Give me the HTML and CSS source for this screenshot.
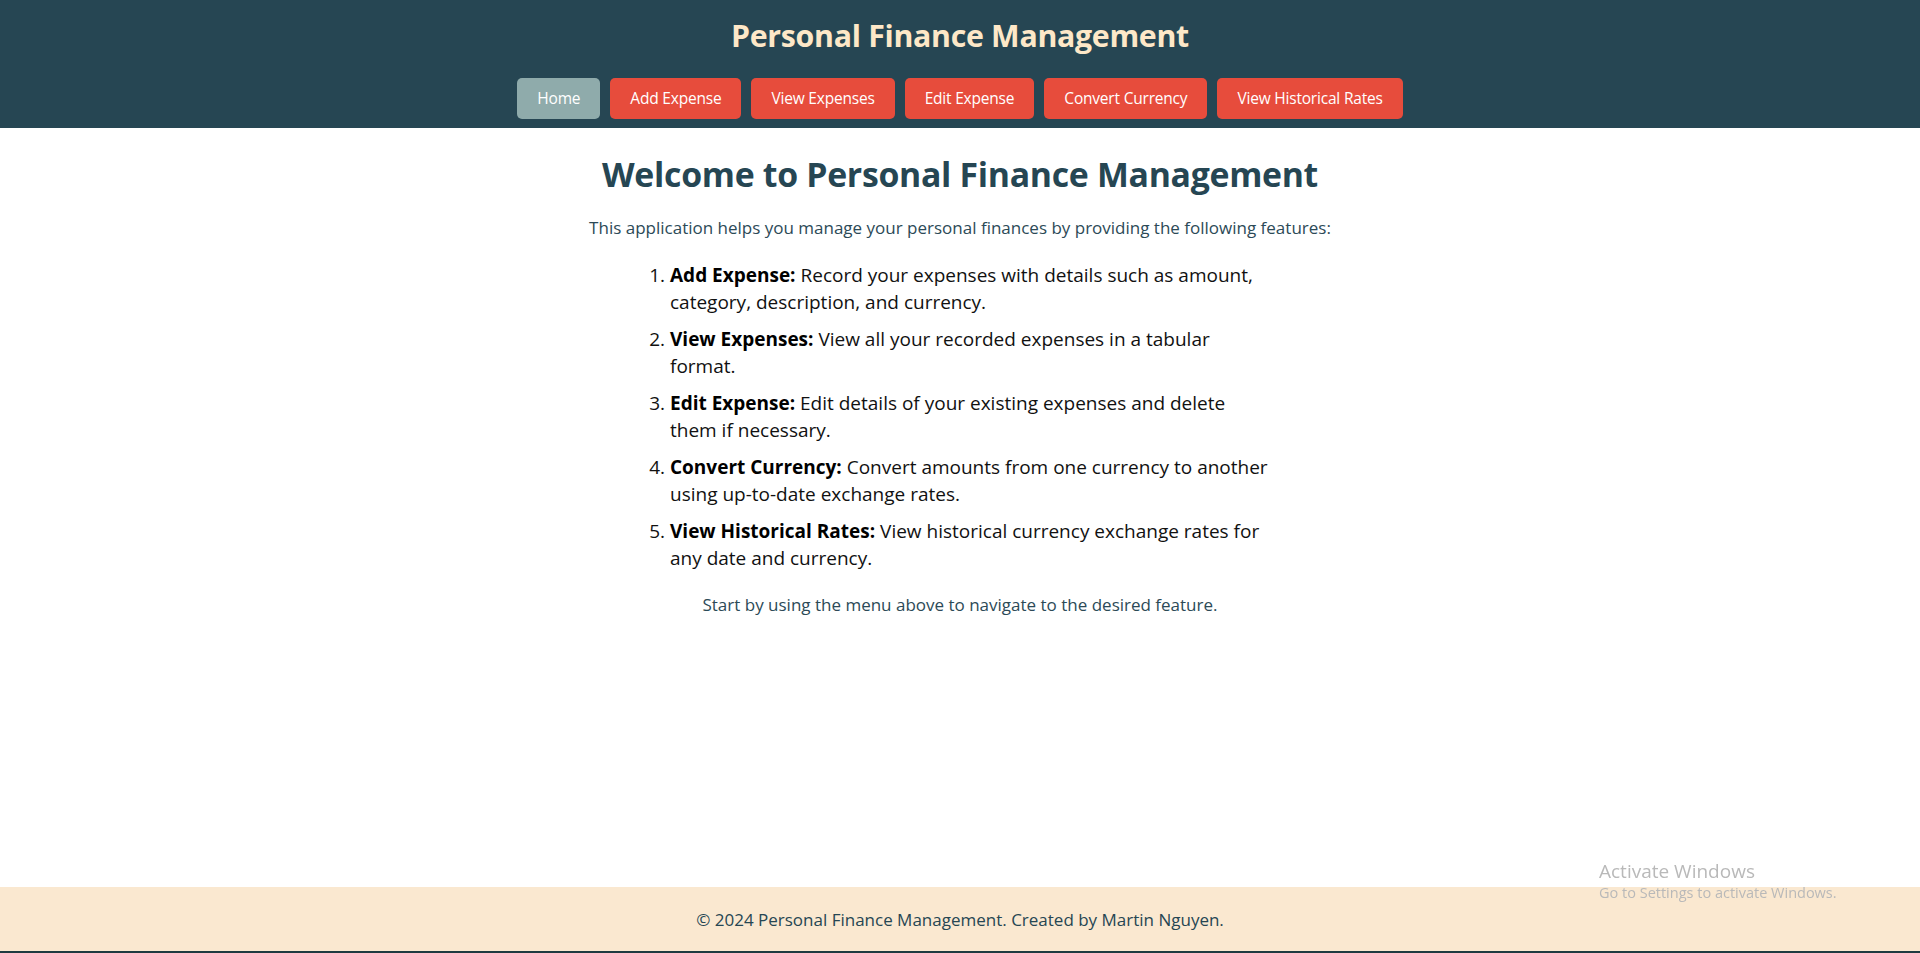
FILE: index.html
```html
<!DOCTYPE html>
<html lang="en">
<head>
<meta charset="utf-8">
<title>Personal Finance Management</title>
<link rel="stylesheet" href="styles.css">
</head>
<body>
<div class="page">
  <header class="site-header">
    <h1 class="site-title">Personal Finance Management</h1>
    <nav class="nav">
      <a class="nav-btn active" href="#">Home</a>
      <a class="nav-btn" href="#">Add Expense</a>
      <a class="nav-btn" href="#">View Expenses</a>
      <a class="nav-btn" href="#">Edit Expense</a>
      <a class="nav-btn" href="#">Convert Currency</a>
      <a class="nav-btn" href="#">View Historical Rates</a>
    </nav>
  </header>
  <main class="content">
    <h2 class="welcome">Welcome to Personal Finance Management</h2>
    <p class="intro">This application helps you manage your personal finances by providing the following features:</p>
    <ol class="features">
      <li><strong>Add Expense:</strong> Record your expenses with details such as amount, category, description, and currency.</li>
      <li><strong>View Expenses:</strong> View all your recorded expenses in a tabular format.</li>
      <li><strong>Edit Expense:</strong> Edit details of your existing expenses and delete them if necessary.</li>
      <li><strong>Convert Currency:</strong> Convert amounts from one currency to another using up-to-date exchange rates.</li>
      <li><strong>View Historical Rates:</strong> View historical currency exchange rates for any date and currency.</li>
    </ol>
    <p class="outro">Start by using the menu above to navigate to the desired feature.</p>
  </main>
  <footer class="site-footer">
    <p>&copy; 2024 Personal Finance Management. Created by Martin Nguyen.</p>
  </footer>
  <div class="taskbar-edge"></div>
</div>
<div class="activate">
  <div class="activate-title">Activate Windows</div>
  <div class="activate-sub">Go to Settings to activate Windows.</div>
</div>
</body>
</html>
```
FILE: styles.css
```css
* { box-sizing: border-box; }
html, body { margin: 0; padding: 0; height: 100%; }
body {
  font-family: "Open Sans", "Noto Sans", sans-serif;
  background: #ffffff;
  color: #264653;
}
.page {
  min-height: 100%;
  display: flex;
  flex-direction: column;
}
.site-header {
  background: #264653;
  padding: 17px 0 9px;
  text-align: center;
}
.site-title {
  margin: 0;
  font-size: 30.3px;
  line-height: 38px;
  font-weight: 700;
  color: #fde8c8;
  letter-spacing: -0.3px;
}
.nav {
  margin-top: 23px;
  display: flex;
  justify-content: center;
  gap: 10px;
}
.nav-btn {
  display: block;
  background: #e74c3c;
  color: #ffffff;
  text-decoration: none;
  font-size: 15.5px;
  line-height: 21px;
  padding: 10px 20px;
  border-radius: 5px;
  letter-spacing: -0.2px;
}
.nav-btn.active { background: #8fabab; }
.content {
  flex: 1;
  text-align: center;
  padding: 0 20px;
}
.welcome {
  margin: 24px 0 0;
  font-size: 33.8px;
  line-height: 44px;
  font-weight: 700;
  color: #264653;
  letter-spacing: -0.3px;
}
.intro {
  margin: 20px 0 0;
  font-size: 17px;
  line-height: 24px;
  color: #2c4a57;
}
.features {
  width: 660px;
  margin: 22px auto 0;
  padding: 0 14px 0 40px;
  text-align: left;
  color: #111111;
  font-size: 19px;
  line-height: 27px;
}
.features li { margin-bottom: 10px; }
.features strong { font-weight: 700; color: #000; }
.outro {
  margin: 21px 0 0;
  font-size: 17px;
  line-height: 24px;
  color: #2c4a57;
}
.site-footer {
  background: #fae8d0;
  height: 64px;
  display: flex;
  align-items: center;
  justify-content: center;
}
.site-footer p {
  margin: 0;
  font-size: 17px;
  color: #264653;
}
.taskbar-edge { height: 2px; background: #1e3a40; }
.activate {
  position: fixed;
  left: 1599px;
  top: 859px;
  color: #b9b9b9;
  pointer-events: none;
}
.activate-title { font-size: 19px; line-height: 24px; }
.activate-sub { font-size: 14.5px; line-height: 20px; }
```
